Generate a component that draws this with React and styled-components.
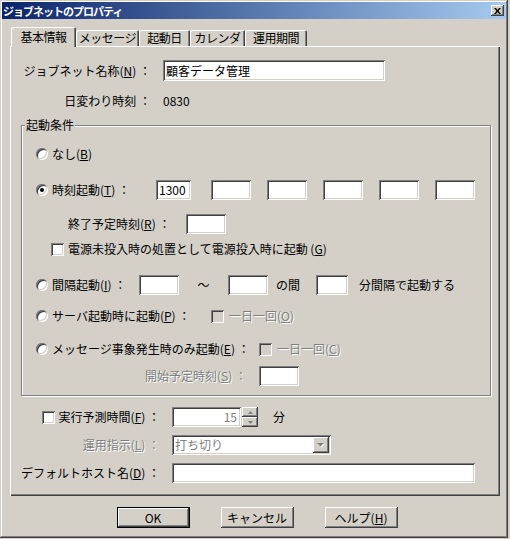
import React from "react";
import styled, { createGlobalStyle, css } from "styled-components";

const face = "#d4d0c8";

const GlobalStyle = createGlobalStyle`
  html, body { margin: 0; padding: 0; background: ${face}; }
  body {
    font-family: "Noto Sans CJK JP", "Noto Sans", sans-serif;
    font-size: 12px;
    line-height: 14px;
    color: #000;
  }
  u { text-underline-offset: 1px; }
`;

const raised = css`
  background: ${face};
  box-shadow: inset -1px -1px #404040, inset 1px 1px #fff,
    inset -2px -2px #808080, inset 2px 2px ${face};
`;

const sunken = css`
  box-shadow: inset 1px 1px #808080, inset -1px -1px #fff,
    inset 2px 2px #404040, inset -2px -2px ${face};
`;

const Window = styled.div`
  width: 508px;
  height: 538px;
  box-sizing: border-box;
  padding: 2px;
  background: ${face};
  box-shadow: inset -1px -1px #404040, inset 1px 1px ${face},
    inset -2px -2px #808080, inset 2px 2px #fff;
  display: flex;
  flex-direction: column;
`;

const TitleBar = styled.div`
  height: 17px;
  display: flex;
  align-items: center;
  justify-content: space-between;
  padding-left: 1px;
  background: linear-gradient(to right, #0a246a, #a6caf0);
  color: #fff;
  font-weight: bold;
  font-size: 11px;
  letter-spacing: -1px;
`;

const CloseButton = styled.div`
  ${raised};
  width: 13px;
  height: 11px;
  margin-right: 2px;
  display: flex;
  align-items: center;
  justify-content: center;
`;

const Body = styled.div`
  padding: 8px 6px 0 8px;
`;

const TabRow = styled.div`
  display: flex;
  align-items: flex-end;
  height: 19px;
  padding-left: 1px;
  position: relative;
  z-index: 1;
`;

const Tab = styled.div`
  width: ${(p) => p.$w}px;
  height: ${(p) => (p.$active ? 20 : 16)}px;
  margin-bottom: ${(p) => (p.$active ? -1 : 0)}px;
  box-sizing: border-box;
  display: flex;
  align-items: center;
  justify-content: center;
  white-space: nowrap;
  letter-spacing: -0.5px;
  background: ${face};
  border-radius: 2px 2px 0 0;
  box-shadow: inset 1px 1px #fff, inset -1px 0 #404040, inset -2px 0 #808080;
`;

const Panel = styled.div`
  width: 490px;
  height: 450px;
  box-sizing: border-box;
  padding: 14px 9px 0 11px;
  box-shadow: inset 1px 1px #fff, inset -1px -1px #404040,
    inset -2px -2px #808080;
`;

const FormRow = styled.div`
  display: grid;
  grid-template-columns: ${(p) => p.$label}px auto;
  column-gap: 12px;
  align-items: center;
  height: ${(p) => p.$h || 20}px;
  margin-top: ${(p) => p.$mt || 0}px;
`;

const RightLabel = styled.span`
  display: flex;
  justify-content: flex-end;
  align-items: center;
  white-space: nowrap;
  ${(p) =>
    p.$disabled &&
    css`
      color: #808080;
      text-shadow: 1px 1px 0 #fff;
    `}
`;

const Edit = styled.div`
  ${sunken};
  background: ${(p) => (p.$gray ? face : "#fff")};
  width: ${(p) => p.$w}px;
  height: ${(p) => p.$h || 20}px;
  margin-left: ${(p) => p.$ml || 0}px;
  box-sizing: border-box;
  padding: 0 4px 0 3px;
  display: flex;
  align-items: center;
  justify-content: ${(p) => (p.$right ? "flex-end" : "flex-start")};
  color: ${(p) => (p.$dim ? "#808080" : "#000")};
  white-space: nowrap;
  flex-shrink: 0;
`;

const Group = styled.div`
  position: relative;
  width: 470px;
  height: 271px;
  margin-top: 14px;
  box-sizing: border-box;
  border: 1px solid #808080;
  box-shadow: inset 1px 1px #fff, 1px 1px 0 #fff;
  padding-left: 14px;
`;

const GroupTitle = styled.span`
  position: absolute;
  top: -8px;
  left: 3px;
  padding: 0 1px;
  background: ${face};
  line-height: 14px;
`;

const Row = styled.div`
  display: flex;
  align-items: center;
  height: 20px;
  margin-top: ${(p) => p.$mt || 0}px;
  padding-left: ${(p) => p.$pl || 0}px;
`;

const Radio = styled.span`
  position: relative;
  width: 12px;
  height: 12px;
  flex-shrink: 0;
  margin-right: 4px;
  border-radius: 50%;
  background: #fff;
  box-shadow: inset 1px 1px #808080, inset -1px -1px #fff,
    inset 2px 2px #404040, inset -2px -2px ${face};
  &::after {
    content: "";
    display: ${(p) => (p.$checked ? "block" : "none")};
    position: absolute;
    left: 4px;
    top: 4px;
    width: 4px;
    height: 4px;
    border-radius: 50%;
    background: #000;
  }
`;

const Check = styled.span`
  ${sunken};
  width: 13px;
  height: 13px;
  flex-shrink: 0;
  margin-left: ${(p) => p.$ml || 0}px;
  margin-right: ${(p) => p.$mr || 4}px;
  background: ${(p) => (p.$disabled ? face : "#fff")};
`;

const Label = styled.span`
  display: inline-block;
  width: ${(p) => (p.$w ? `${p.$w}px` : "auto")};
  margin-left: ${(p) => p.$ml || 0}px;
  text-align: ${(p) => p.$align || "left"};
  white-space: nowrap;
  flex-shrink: 0;
  ${(p) =>
    p.$disabled &&
    css`
      color: #808080;
      text-shadow: 1px 1px 0 #fff;
    `}
`;

const Bottom = styled.div`
  margin-top: 11px;
  display: flex;
  flex-direction: column;
  gap: 8px;
`;

const Spin = styled.div`
  display: flex;
  align-items: center;
`;

const SpinButtons = styled.div`
  display: flex;
  flex-direction: column;
  margin-left: 1px;
`;

const SpinButton = styled.div`
  ${raised};
  width: 16px;
  height: 10px;
  display: flex;
  align-items: center;
  justify-content: center;
`;

const Combo = styled.div`
  ${sunken};
  width: 159px;
  height: 20px;
  box-sizing: border-box;
  background: #fff;
  padding: 2px 2px 2px 3px;
  display: flex;
  align-items: center;
  justify-content: space-between;
  color: #808080;
`;

const DropButton = styled.div`
  ${raised};
  width: 16px;
  height: 16px;
  display: flex;
  align-items: center;
  justify-content: center;
`;

const ButtonRow = styled.div`
  display: flex;
  justify-content: center;
  gap: 31px;
  margin-top: 11px;
  padding-left: 4px;
`;

const Button = styled.div`
  ${raised};
  width: 73px;
  height: 21px;
  box-sizing: border-box;
  display: flex;
  align-items: center;
  justify-content: center;
  white-space: nowrap;
  ${(p) =>
    p.$default &&
    css`
      box-shadow: inset 0 0 0 1px #000, inset -2px -2px #404040,
        inset 2px 2px #fff, inset -3px -3px #808080, inset 3px 3px ${face};
    `}
`;

const tabs = [
  { label: "基本情報", w: 65, active: true },
  { label: "メッセージ", w: 63 },
  { label: "起動日", w: 51 },
  { label: "カレンダ", w: 55 },
  { label: "運用期間", w: 62 },
];

export default function App() {
  return (
    <>
      <GlobalStyle />
      <Window>
        <TitleBar>
          <span>ジョブネットのプロパティ</span>
          <CloseButton>
            <svg width="7" height="6" viewBox="0 0 7 6">
              <path d="M0 0h2l1.5 2 1.5-2h2L4.5 3 7 6H5L3.5 4 2 6H0l2.5-3z" fill="#000" />
            </svg>
          </CloseButton>
        </TitleBar>

        <Body>
          <TabRow>
            {tabs.map((t) => (
              <Tab key={t.label} $w={t.w} $active={t.active}>
                {t.label}
              </Tab>
            ))}
          </TabRow>

          <Panel>
            <FormRow $label={130} $h={21}>
              <RightLabel>
                ジョブネット名称(<u>N</u>) ：
              </RightLabel>
              <Edit $w={222} $h={21}>
                顧客データ管理
              </Edit>
            </FormRow>
            <FormRow $label={130} $mt={10}>
              <RightLabel>日変わり時刻 ：</RightLabel>
              <span>0830</span>
            </FormRow>

            <Group>
              <GroupTitle>起動条件</GroupTitle>

              <Row $mt={18}>
                <Radio />
                <Label>
                  なし(<u>B</u>)
                </Label>
              </Row>

              <Row $mt={16}>
                <Radio $checked />
                <Label $w={104}>
                  時刻起動(<u>T</u>) ：
                </Label>
                <Edit $w={35}>1300</Edit>
                <Edit $w={40} $ml={20} />
                <Edit $w={40} $ml={16} />
                <Edit $w={40} $ml={16} />
                <Edit $w={40} $ml={16} />
                <Edit $w={40} $ml={16} />
              </Row>

              <Row $mt={14} $pl={32}>
                <Label $w={118}>
                  終了予定時刻(<u>R</u>) ：
                </Label>
                <Edit $w={40} />
              </Row>

              <Row $mt={5} $pl={15}>
                <Check />
                <Label>
                  電源未投入時の処置として電源投入時に起動 (<u>G</u>)
                </Label>
              </Row>

              <Row $mt={16}>
                <Radio />
                <Label $w={87}>
                  間隔起動(<u>I</u>) ：
                </Label>
                <Edit $w={40} />
                <Label $w={49} $align="center">
                  ～
                </Label>
                <Edit $w={40} />
                <Label $w={48} $ml={0}>
                  &nbsp;&nbsp;&nbsp;の間
                </Label>
                <Edit $w={32} />
                <Label $ml={11}>分間隔で起動する</Label>
              </Row>

              <Row $mt={11}>
                <Radio />
                <Label $w={159}>
                  サーバ起動時に起動(<u>P</u>) ：
                </Label>
                <Check $disabled $mr={5} />
                <Label $disabled>
                  一日一回(<u>O</u>)
                </Label>
              </Row>

              <Row $mt={13}>
                <Radio />
                <Label $w={207}>
                  メッセージ事象発生時のみ起動(<u>E</u>) ：
                </Label>
                <Check $disabled $mr={5} />
                <Label $disabled>
                  一日一回(<u>C</u>)
                </Label>
              </Row>

              <Row $mt={7}>
                <Label $w={211} $align="right" $disabled>
                  開始予定時刻(<u>S</u>) ：
                </Label>
                <Edit $w={40} $ml={12} />
              </Row>
            </Group>

            <Bottom>
              <FormRow $label={139}>
                <RightLabel>
                  <Check />
                  実行予測時間(<u>F</u>) ：
                </RightLabel>
                <Spin>
                  <Edit $w={69} $right $dim>
                    15
                  </Edit>
                  <SpinButtons>
                    <SpinButton>
                      <svg width="5" height="3" viewBox="0 0 5 3">
                        <path d="M2.5 0L5 3H0z" fill="#808080" />
                      </svg>
                    </SpinButton>
                    <SpinButton>
                      <svg width="5" height="3" viewBox="0 0 5 3">
                        <path d="M0 0h5L2.5 3z" fill="#808080" />
                      </svg>
                    </SpinButton>
                  </SpinButtons>
                  <Label $ml={15}>分</Label>
                </Spin>
              </FormRow>

              <FormRow $label={139}>
                <RightLabel $disabled>
                  運用指示(<u>L</u>) ：
                </RightLabel>
                <Combo>
                  <span>打ち切り</span>
                  <DropButton>
                    <svg width="8" height="5" viewBox="0 0 8 5">
                      <path d="M1 1h7L4.5 4.5z" fill="#fff" />
                      <path d="M0 0h7L3.5 3.5z" fill="#808080" />
                    </svg>
                  </DropButton>
                </Combo>
              </FormRow>

              <FormRow $label={139}>
                <RightLabel>
                  デフォルトホスト名(<u>D</u>) ：
                </RightLabel>
                <Edit $w={303} />
              </FormRow>
            </Bottom>
          </Panel>

          <ButtonRow>
            <Button $default>OK</Button>
            <Button>キャンセル</Button>
            <Button>
              ヘルプ(<u>H</u>)
            </Button>
          </ButtonRow>
        </Body>
      </Window>
    </>
  );
}
